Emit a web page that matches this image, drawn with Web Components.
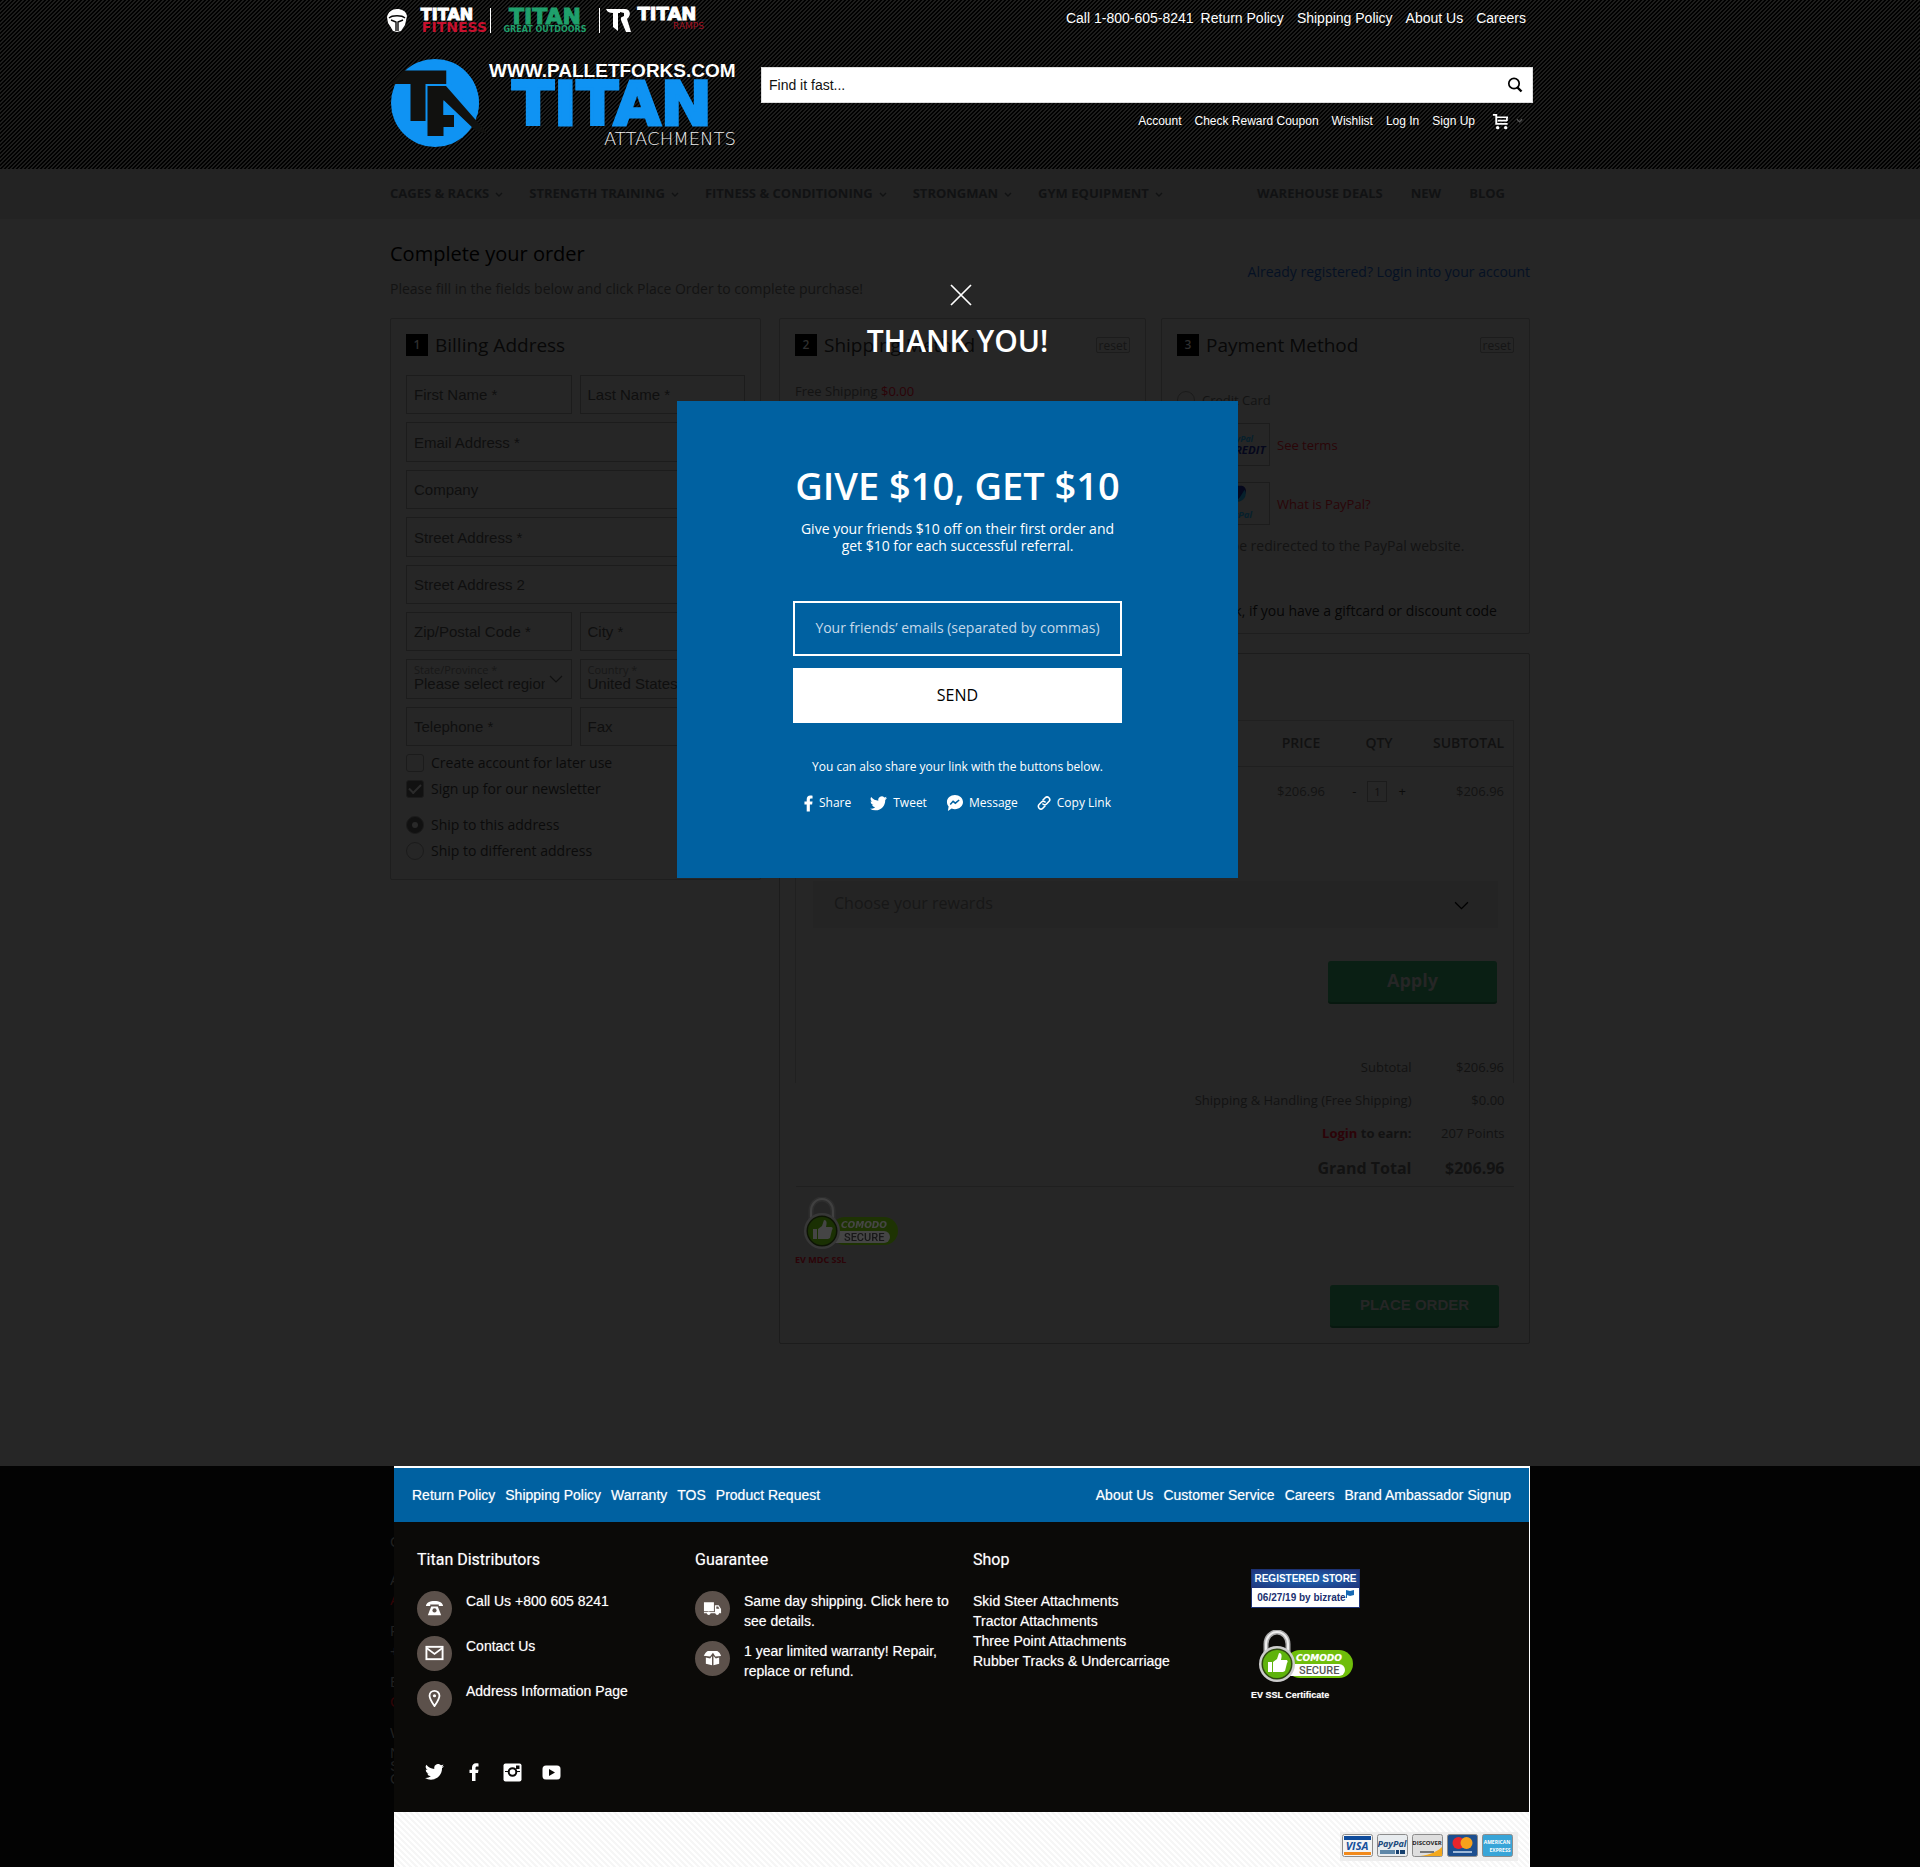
<!DOCTYPE html>
<html lang="en">
<head>
<meta charset="utf-8">
<title>Complete your order</title>
<style>
body{margin:0;min-height:100vh;display:flex;flex-direction:column;position:relative;background:#262626;font-family:"Open Sans",sans-serif;font-size:14px}
site-footer{flex:1}
</style>
</head>
<body>
<site-header></site-header>
<site-nav></site-nav>
<checkout-page></checkout-page>
<site-footer></site-footer>
<referral-modal></referral-modal>

<script>
class Base extends HTMLElement{
  connectedCallback(){
    if(this.shadowRoot) return;
    this.attachShadow({mode:'open'}).innerHTML='<style>*{box-sizing:border-box}a{color:inherit;text-decoration:none}button{font:inherit;cursor:pointer}p,h1,h2,h3,ul{margin:0;padding:0}ul{list-style:none}'+this.css()+'</style>'+this.html();
  }
  css(){return ''}
  html(){return '<slot></slot>'}
}

const ICONS={
  chevron:['0 0 8 6','<path d="M1 1l3 3 3-3" fill="none" stroke="currentColor" stroke-width="1.4"/>'],
  chevronLg:['0 0 14 9','<path d="M1 1l6 6 6-6" fill="none" stroke="currentColor" stroke-width="1.2"/>'],
  close:['0 0 22 22','<path d="M1 1l20 20M21 1L1 21" fill="none" stroke="currentColor" stroke-width="1.7"/>'],
  search:['0 0 16 16','<circle cx="7" cy="6.5" r="5.2" fill="none" stroke="currentColor" stroke-width="1.7"/><path d="M10.5 10.5l4 4" stroke="currentColor" stroke-width="2.4"/>'],
  cart:['0 0 18 17','<path d="M1 1.500h3.500v9.500h12" fill="none" stroke="currentColor" stroke-width="2"/><path d="M5 4h12M6 7.500h10M15.800 4v4" stroke="currentColor" stroke-width="1.800" fill="none"/><circle cx="6" cy="15" r="1.800" fill="currentColor"/><circle cx="14.500" cy="15" r="1.800" fill="currentColor"/>'],
  facebook:['0 0 10 18','<path d="M3 18V10H.5V6.800H3V4.500C3 1.800 4.500.2 7 .2c1 0 2 .1 2.500.2v3H8C6.800 3.400 6.500 4 6.500 5v1.800h3L9 10H6.500v8z" fill="currentColor"/>'],
  twitter:['0 0 24 20','<path d="M24 2.400a9.800 9.800 0 0 1-2.800.8A4.900 4.900 0 0 0 23.300.4a9.900 9.900 0 0 1-3.100 1.200 4.900 4.900 0 0 0-8.400 4.500A14 14 0 0 1 1.700.9a4.900 4.900 0 0 0 1.500 6.600A4.900 4.900 0 0 1 1 6.900v.1a4.900 4.900 0 0 0 3.900 4.800 5 5 0 0 1-2.200.1 4.900 4.900 0 0 0 4.600 3.400A9.900 9.900 0 0 1 0 17.500a14 14 0 0 0 7.500 2.200c9.100 0 14-7.500 14-14v-.6A10 10 0 0 0 24 2.400z" fill="currentColor"/>'],
  messenger:['0 0 18 18','<path d="M9.500.5C4.700.5 1 3.700 1 8c0 1.800.7 3.500 1.800 4.800L2 17.500l4-2.600c1 .4 2.200.6 3.500.6C14.200 15.500 18 12.200 18 8S14.200.5 9.500.5z" fill="currentColor"/><path d="M4.500 10.500l3-3.300 2.400 2 4-3.400" fill="none" stroke="#0061a1" stroke-width="1.600"/>'],
  link:['0 0 14 14','<g fill="none" stroke="currentColor" stroke-width="1.600" stroke-linecap="round"><path d="M6 4l2.200-2.200a2.500 2.500 0 0 1 3.700 3.700L9.500 8a2.500 2.500 0 0 1-3.600 0"/><path d="M8 10l-2.200 2.200a2.500 2.500 0 0 1-3.700-3.700L4.500 6a2.500 2.500 0 0 1 3.600 0"/></g>'],
  instagram:['0 0 19 19','<rect x=".5" y=".5" width="18" height="18" rx="2" fill="currentColor"/><rect x="13" y="2.500" width="3.500" height="3.500" fill="#0b0a08"/><path d="M2 8.500h3.500M13.500 8.500H17" fill="none" stroke="#0b0a08" stroke-width="1.200"/><circle cx="9.500" cy="9" r="3.800" fill="currentColor" stroke="#0b0a08" stroke-width="2"/>'],
  youtube:['0 0 19 15','<rect x=".5" y=".5" width="18" height="14" rx="3.500" fill="currentColor"/><path d="M7 4l6 3.500L7 11z" fill="#0b0a08"/>'],
  phone:['0 0 20 18','<path d="M1 7C1 3.500 5 1.500 10 1.500S19 3.500 19 7H14.500V5.200h-9V7z" fill="currentColor"/><path d="M6.500 7.500h7l3.500 9H3z" fill="currentColor"/><circle cx="10" cy="11.500" r="2.200" fill="#5c514b"/>'],
  mail:['0 0 20 18','<rect x="1.500" y="2.500" width="17" height="13" fill="none" stroke="currentColor" stroke-width="2"/><path d="M2 4l8 6 8-6" fill="none" stroke="currentColor" stroke-width="1.800"/>'],
  pin:['0 0 20 20','<path d="M10 19C7 14.500 4.500 11 4.500 7.500a5.500 5.500 0 0 1 11 0C15.500 11 13 14.500 10 19z" fill="none" stroke="currentColor" stroke-width="2"/><circle cx="10" cy="7.500" r="1.800" fill="currentColor"/>'],
  truck:['0 0 20 18','<path d="M1 3h10.500v9.500H1zM12.500 6h4l2.500 4v4h-6.500z" fill="currentColor"/><path d="M14 7.500h2l1.200 2.300H14z" fill="#5c514b"/><path d="M1 13.300h18v1.200H1z" fill="currentColor"/><circle cx="6" cy="14.500" r="1.800" fill="currentColor"/><circle cx="15" cy="14.500" r="1.800" fill="currentColor"/>'],
  box:['0 0 20 18','<path d="M5 1.500h10c2 1 3.500 3 4 5.500l-6 .5-2.500-4-3 4L.8 6.500C2 4 3.500 2.500 5 1.500z" fill="currentColor"/><path d="M3 8.500l4.500 1 2-2.500v9.500l-6.500-1.500zM17 8.500l-3.500 1-2.500-2.500v9.500l6-1.500z" fill="currentColor"/>']
};
class UiIcon extends Base{
  css(){return ':host{display:inline-flex;flex:none}svg{display:block;width:100%;height:100%}'}
  html(){const i=ICONS[this.getAttribute('name')];return '<svg viewBox="'+i[0]+'" aria-hidden="true">'+i[1]+'</svg>'}
}

class BrandStrip extends Base{
  css(){return ':host{display:block}svg{display:block}text{font-family:"DejaVu Sans",sans-serif;font-weight:700}'}
  html(){return `<svg width="320" height="40" viewBox="387 0 320 40" role="img" aria-label="Titan brands">
    <path d="M387 17c1-5 5-8 10-8s9 2 10 7l-2 9-4 6-4 1-4-1-3-5-2-3z" fill="#fff"/><path d="M389 18c3-3 13-3 16 0M391 20l5 2v9M403 20l-5 2v9" stroke="#0a0a0a" stroke-width="1.400" fill="none"/>
    <text x="447" y="20" font-size="16" text-anchor="middle" fill="#fff" stroke="#fff">TITAN</text>
    <text x="487" y="32" font-size="14" text-anchor="end" fill="#c8102e">FITNESS</text>
    <path d="M490.500 8v25M599.500 8v25" stroke="#fff"/>
    <text x="545" y="24" font-size="22" text-anchor="middle" fill="#1fa06c" stroke="#1fa06c">TITAN</text>
    <text x="545" y="32" font-size="8" text-anchor="middle" fill="#1fa06c">GREAT OUTDOORS</text>
    <path d="M606 9h19c5 0 7 6 2 10l4 13h-5l-5-12v-7h-3v18l-5-4V13c-3 0-6-1-7-4z" fill="#fff"/><path d="M620 12v6l4-2v-3z" fill="#0a0a0a"/>
    <text x="667" y="20" font-size="18" text-anchor="middle" fill="#fff" stroke="#fff">TITAN</text>
    <text x="704" y="29" font-size="9" text-anchor="end" fill="#a01020" style="font-weight:400">RAMPS</text>
  </svg>`}
}
class TitanLogo extends Base{
  css(){return ':host{display:block}svg{display:block}'}
  html(){return `<svg width="347" height="90" viewBox="390 59 347 90" role="img" aria-label="Titan Attachments">
    <circle cx="435" cy="103" r="44" fill="#0f93f3"/>
    <path d="M403 70.500H446.500V84H425.500V121H410.500V84H390L396 78z" fill="#11110f"/>
    <path d="M427.500 86H446L488 134 476 131 443.500 100V115H454V127H443.500V136H427.500z" fill="#11110f"/>
    <path d="M450 84L488 134M443 100L468 131" stroke="#0f93f3" stroke-width="0"/>
    <path d="M443.500 101L468 130 462 138 454 128V115H443.500z" fill="#0f93f3"/>
    <path d="M443.500 115H454V127H443.500z" fill="#11110f"/>
    <path d="M447 61a44 44 0 0 1 30 55L451 84H446.500V70z" fill="#0f93f3"/>
    <text x="489" y="77" font-family="Liberation Sans,sans-serif" font-size="19" font-weight="700" fill="#fff">WWW.PALLETFORKS.COM</text>
    <text x="612" y="125" text-anchor="middle" font-family="DejaVu Sans,sans-serif" font-size="61" font-weight="700" fill="#0f93f3" stroke="#0f93f3" stroke-width="3">TITAN</text>
    <text x="736" y="145" text-anchor="end" font-family="DejaVu Sans,sans-serif" font-size="18" font-weight="200" fill="#eee">ATTACHMENTS</text>
  </svg>`}
}
class SiteHeader extends Base{
  css(){return `:host{display:block;color:#fff;font-family:"Liberation Sans",Arial,sans-serif;background:linear-gradient(135deg,#000 25%,#1d1d1c 25% 50%,#000 50% 75%,#1d1d1c 75%) 0 0/4px 4px}
    .in{max-width:1140px;margin:auto;padding-bottom:20px}
    .top{display:flex;justify-content:space-between;margin:0 4px 0 -3px}
    .links{display:flex;gap:13px;line-height:36px;font-size:14px}
    .links a:first-child{margin-right:-6px}
    .main{display:flex;gap:24px;margin:19px -3px 0 0}
    .right{flex:1;padding-top:8px}
    form{display:flex;align-items:center;background:#fff;border:1px solid #ddd;height:36px;padding:0 9px 0 7px}
    input{flex:1;border:0;outline:0;background:none;font:14px "Liberation Sans",Arial,sans-serif;padding:0;color:#000}
    input::placeholder{color:#111;opacity:1}
    form button{border:0;background:none;padding:0;color:#000;display:flex}
    form ui-icon{width:16px;height:16px}
    .acct{display:flex;justify-content:flex-end;align-items:center;gap:13px;font-size:12px;margin:8px 10px 0 0;line-height:20px}
    .cart{display:flex;align-items:center;gap:7px;margin-left:4px}
    .cart ui-icon{width:17px;height:17px}.cart .c{width:7px;height:6px;color:#555}`}
  html(){return `<header class="in"><div class="top"><brand-strip></brand-strip><nav class="links"><a href="#">Call 1-800-605-8241</a><a href="#">Return Policy</a><a href="#">Shipping Policy</a><a href="#">About Us</a><a href="#">Careers</a></nav></div>
    <div class="main"><titan-logo></titan-logo><div class="right"><form><input aria-label="Search" placeholder="Find it fast..."><button type="button" aria-label="Search"><ui-icon name="search"></ui-icon></button></form>
    <nav class="acct"><a href="#">Account</a><a href="#">Check Reward Coupon</a><a href="#">Wishlist</a><a href="#">Log In</a><a href="#">Sign Up</a><a class="cart" href="#" aria-label="Cart"><ui-icon name="cart"></ui-icon><ui-icon class="c" name="chevron"></ui-icon></a></nav></div></div></header>`}
}
class SiteNav extends Base{
  css(){return `:host{display:block;background:#232323;color:#111213}
    nav{max-width:1140px;margin:auto;display:flex;gap:26px;padding:0 25px 2px 0;font-size:13px;font-weight:700;line-height:48px}
    a{display:flex;align-items:center;gap:6px}.r{display:flex;gap:28px;margin-left:auto}ui-icon{width:8px;height:6px;margin-top:4px}`}
  html(){const c='<ui-icon name="chevron"></ui-icon>';
    return '<nav>'+['CAGES &amp; RACKS','STRENGTH TRAINING','FITNESS &amp; CONDITIONING','STRONGMAN','GYM EQUIPMENT'].map(t=>'<a href="#">'+t+c+'</a>').join('')+'<div class="r"><a href="#">WAREHOUSE DEALS</a><a href="#">NEW</a><a href="#">BLOG</a></div></nav>'}
}
class StepPanel extends Base{
  css(){return `:host{display:block;border:1px solid #1e1e1e;border-radius:2px;padding:15px 15px 0}
    header{display:flex;align-items:center;height:22px}
    b{width:22px;height:22px;background:#000;color:#2f2f2f;font-weight:600;font-size:12px;line-height:22px;text-align:center;margin-right:7px}
    h2{font-size:19px;font-weight:400;line-height:22px;color:#080808}
    button{margin-left:auto;border:1px solid #1c1c1c;border-radius:2px;background:none;color:#151515;font-size:12px;line-height:13px;height:16px;padding:0 2px}`}
  html(){return '<header><b>'+this.getAttribute('step')+'</b><h2>'+this.getAttribute('heading')+'</h2>'+(this.hasAttribute('reset')?'<button type="button">reset</button>':'')+'</header><slot></slot>'}
}
class BillingForm extends Base{
  css(){return `:host{display:block;color:#111}
    .g{display:grid;grid-template-columns:1fr 1fr;grid-template-rows:39px 40px 39px 40px 39px 39px 40px 39px;gap:8px;margin-top:19px}
    .w{grid-column:1/3}
    input.t,.s{border:1px solid #1c1c1c;background:none;width:100%;min-width:0;height:100%}
    input.t{font:15px "Liberation Sans",Arial,sans-serif;padding:0 7px;color:#0f0f0f}
    input.t::placeholder{color:#0f0f0f;opacity:1}
    .s{position:relative;padding:3px 26px 0 7px;display:flex;flex-direction:column}
    .s label{font-size:11px;line-height:14px;color:#181818}
    select{appearance:none;border:0;background:none;padding:0;height:18px;margin-top:-2px;font:15px/18px "Liberation Sans",Arial,sans-serif;color:#0f0f0f;width:100%}
    .s ui-icon{position:absolute;right:8px;top:15px;width:14px;height:9px}
    .c{display:flex;align-items:center;gap:7px;font-size:14px;line-height:18px;color:#0b0b0b;margin-top:8px}
    .c+.sp{margin-top:18px}
    .c input{appearance:none;margin:0;width:18px;height:18px;border:1px solid #1b1b1b;border-radius:3px;display:grid;place-items:center}
    .c input[type=radio]{border-radius:50%}
    .c input:checked{background:#111}
    .c input[type=checkbox]:checked::after{content:"";width:10px;height:5px;border:solid #2b2b2b;border-width:0 0 2px 2px;rotate:-45deg;margin-bottom:3px}
    .c input[type=radio]:checked::after{content:"";width:6px;height:6px;border-radius:50%;background:#292929}`}
  html(){const f=(p,w)=>'<input class="t'+(w?' w':'')+'" placeholder="'+p+'" aria-label="'+p+'">';
    const s=(id,l,o)=>'<div class="s"><label for="'+id+'">'+l+' *</label><select id="'+id+'"><option>'+o+'</option></select><ui-icon name="chevronLg"></ui-icon></div>';
    return '<form><div class="g">'+f('First Name *')+f('Last Name *')+f('Email Address *',1)+f('Company',1)+f('Street Address *',1)+f('Street Address 2',1)+f('Zip/Postal Code *')+f('City *')+s('st','State/Province','Please select region, state or province')+s('co','Country','United States')+f('Telephone *')+f('Fax')+`</div>
    <label class="c"><input type="checkbox">Create account for later use</label>
    <label class="c"><input type="checkbox" checked>Sign up for our newsletter</label>
    <label class="c sp"><input type="radio" name="ship" checked>Ship to this address</label>
    <label class="c"><input type="radio" name="ship">Ship to different address</label></form>`}
}
class PaymentOptions extends Base{
  css(){return `:host{display:block;color:#131313;font-size:13px}
    label{display:flex;align-items:center;gap:7px;height:18px}
    input{appearance:none;margin:0;width:18px;height:18px;border:1px solid #1b1b1b;border-radius:50%}
    .f{margin-top:35px}
    .p{display:flex;align-items:center;gap:7px;margin-top:14px}
    .p+.p{margin-top:16px}
    .p label{height:43px}svg{border:1px solid #1c1c1c;display:block}
    a{color:#2a0508}
    p{line-height:20px;margin-top:11px;font-size:14px}
    .d{margin:45px 17px 0 0;text-align:right;color:#070707}
    text{font:italic 700 9px "Open Sans",sans-serif}`}
  html(){return `<label class="f"><input type="radio" name="pay">Credit Card</label>
    <div class="p"><label><input type="radio" name="pay" aria-label="PayPal Credit"><svg width="68" height="43" viewBox="0 0 68 43"><text x="52" y="19" text-anchor="end" fill="#06202c">PayPal</text><text x="65" y="31" text-anchor="end" fill="#05071c" style="font-size:12px">CREDIT</text></svg></label><a href="#">See terms</a></div>
    <div class="p"><label><input type="radio" name="pay" aria-label="PayPal"><svg width="68" height="43" viewBox="0 0 68 43"><path d="M30 3h10c5 1 6 7 2 11l-5 2-2 5h-8z" fill="#05071c"/><path d="M43 7c3 5 0 12-8 13l3-5z" fill="#06202c"/><text x="51" y="37" text-anchor="end" fill="#06202c" style="font-size:10px">PayPal</text></svg></label><a href="#">What is PayPal?</a></div>
    <p>You will be redirected to the PayPal website.</p><p class="d">Click, if you have a giftcard or discount code</p>`}
}
class ComodoBadge extends Base{
  css(){return ':host{display:block}svg{display:block}:host([dim]) svg{filter:brightness(.27)}'}
  html(){return `<svg width="96" height="53" viewBox="0 0 96 53" role="img" aria-label="Comodo Secure">
    <path d="M8 24V14a11 12 0 0 1 22 0v10" fill="none" stroke="#aaa" stroke-width="5"/><path d="M8 24V14a11 12 0 0 1 22 0v10" fill="none" stroke="#eee" stroke-width="2"/>
    <rect x="28" y="20" width="67" height="28" rx="14" fill="#6fbe0a"/><path d="M30 34h51a6 6 0 0 1 0 12H30z" fill="#fff"/>
    <circle cx="19" cy="34" r="18" fill="#ccc"/><circle cx="19" cy="34" r="15.500" fill="#2f4a10"/><circle cx="19" cy="34" r="14" fill="#5fb30c"/>
    <path d="M10 32h4v10h-4zM15 32l4-3 2-6c3 0 3 3 2 7h5c2 0 2 2 1 3l-2 8-2 1H15z" fill="#fff"/>
    <text x="38" y="31" font-family="DejaVu Sans,sans-serif" font-size="9" font-style="italic" font-weight="700" fill="#fff">COMODO</text>
    <text x="41" y="44" font-family="Roboto,sans-serif" font-size="11" font-weight="500" fill="#555">SECURE</text></svg>`}
}
class OrderReview extends Base{
  css(){return `:host{display:block;border:1px solid #1c1c1c;border-radius:2px;padding:66px 15px 15px;color:#131313;font-size:13px}
    .b{border:1px solid #202020;border-width:1px 1px 0;padding-bottom:46px}
    table{width:100%;border-collapse:collapse}
    th,td{padding:0;text-align:center}
    .i th{font-size:14px;font-weight:600;height:45px;padding-bottom:2px;color:#111;border-bottom:1px solid #1f1f1f}
    .i td{height:50px}
    .i .p{width:78px}.i th:last-child,.i td:last-child{width:95px;text-align:right;padding-right:9px}
    .q{display:flex;align-items:center;justify-content:center;gap:11px}
    .q button{border:0;background:none;padding:0;color:#0b0b0b}
    .q input{width:20px;height:21px;border:1px solid #1b1b1b;background:none;text-align:center;padding:0;font:11px "Open Sans",sans-serif;color:#101010}
    .sel{position:relative;margin:65px 15px 0 17px}
    select{appearance:none;width:100%;height:47px;border:0;background:#242424;padding:0 0 3px 21px;font:16px "Open Sans",sans-serif;color:#171717}
    .sel ui-icon{position:absolute;right:29px;top:20px;width:15px;height:10px;color:#000}
    .btn{display:block;width:169px;height:43px;border:0;border-bottom:2px solid #07180f;border-radius:3px;background:#0a1f14;color:#262626;font-weight:700;padding-bottom:4px;margin:33px 16px 0 auto;font-size:18px}
    .t{color:#121212}.t td{text-align:right;height:33px;padding-right:10px}.t td:last-child{width:92px;padding-right:9px}
    .t tr:first-child td:first-child{border-left:1px solid #202020}.t tr:first-child td:last-child{border-right:1px solid #202020}
    .t .g td{height:37px;padding-top:2px;font-size:16px;font-weight:700;border-bottom:1px solid #1f1f1f}
    .red{color:#2c0308}
    comodo-badge{margin:10px 0 0 8px}
    .ev{display:block;font-size:9px;font-weight:700;line-height:14px;margin-top:3px}
    .place{font-family:"Liberation Sans",Arial,sans-serif;font-size:15px;padding-bottom:2px;margin:18px 15px 0 auto}`}
  html(){return `<div class="b"><table class="i"><thead><tr><th></th><th class="p">PRICE</th><th class="p">QTY</th><th>SUBTOTAL</th></tr></thead><tbody><tr><td></td><td>$206.96</td><td><div class="q"><button type="button" aria-label="Less">-</button><input aria-label="Quantity" value="1"><button type="button" aria-label="More">+</button></div></td><td>$206.96</td></tr></tbody></table>
    <div class="sel"><select aria-label="Rewards"><option>Choose your rewards</option></select><ui-icon name="chevronLg"></ui-icon></div>
    <button class="btn" type="button">Apply</button></div>
    <table class="t"><tbody><tr><td>Subtotal</td><td>$206.96</td></tr><tr><td>Shipping &amp; Handling (Free Shipping)</td><td>$0.00</td></tr><tr><td><strong><a class="red" href="#">Login</a> to earn:</strong></td><td>207 Points</td></tr><tr class="g"><td>Grand Total</td><td>$206.96</td></tr></tbody></table>
    <comodo-badge dim></comodo-badge><a class="ev red" href="#">EV MDC SSL</a>
    <button class="btn place" type="button">PLACE ORDER</button>`}
}
class CheckoutPage extends Base{
  css(){return `:host{display:block;padding-bottom:122px}
    main{max-width:1140px;margin:auto;padding-top:18px}
    .h{display:flex;justify-content:space-between;align-items:flex-start;height:81px}
    h1{font-size:20px;font-weight:400;line-height:34px;color:#000}
    .h p{line-height:20px;margin-top:8px;color:#131313}
    .h>a{color:#051124;margin-top:25px;line-height:20px}
    .cols{display:grid;grid-template-columns:371px 1fr;gap:18px;align-items:start}
    .r{display:grid;grid-template-columns:367px 1fr;gap:19px 15px}
    .bill{padding-bottom:19px}
    .pay{padding-bottom:12px}
    .free{font-size:13px;line-height:20px;margin-top:25px;color:#131313}.free span{color:#2c0308}
    order-review{grid-column:1/3}`}
  html(){return `<main><div class="h"><div><h1>Complete your order</h1><p>Please fill in the fields below and click Place Order to complete purchase!</p></div><a href="#">Already registered? Login into your account</a></div>
    <div class="cols"><step-panel class="bill" step="1" heading="Billing Address"><billing-form></billing-form></step-panel>
    <div class="r"><step-panel step="2" heading="Shipping Method" reset><p class="free">Free Shipping <span>$0.00</span></p></step-panel>
    <step-panel class="pay" step="3" heading="Payment Method" reset><payment-options></payment-options></step-panel>
    <order-review></order-review></div></div></main>`}
}
class ReferralModal extends Base{
  css(){return `:host{position:absolute;inset:0;display:flex;flex-direction:column;align-items:center;padding:284px 5px 0 0;box-sizing:border-box;color:#fff}
    .x{border:0;background:none;padding:0;color:#fff;margin-left:7px;display:flex}.x ui-icon{width:22px;height:22px}
    h2{font-size:30px;font-weight:600;line-height:40px;margin:15px 0 40px}
    section{width:561px;background:#0061a1;padding:59px 116px 65px;display:flex;flex-direction:column;align-items:center;text-align:center}
    h3{font-size:38px;font-weight:600;line-height:50px;white-space:nowrap}
    .d{font-size:14px;line-height:17px;margin:10px 0 47px;white-space:nowrap}
    form{display:grid;gap:12px;width:100%}
    input{height:55px;border:2px solid #fff;background:none;text-align:center;font:14px "Open Sans",sans-serif;color:#fff;padding:0 0 3px;min-width:0}
    input::placeholder{color:#c5d9ea;opacity:1}
    form button{height:55px;border:0;background:#fff;color:#000;font-size:16px;padding-bottom:2px}
    .s{font-size:12px;line-height:18px;margin:35px 0 17px}
    ul{display:flex;gap:19px;font-size:12px;line-height:20px}
    li a{display:flex;align-items:center;gap:6px}
    .f{width:9px;height:17px}.w{width:17px;height:15px}.m{width:17px;height:18px}.l{width:14px;height:14px}`}
  html(){return `<button class="x" type="button" aria-label="Close"><ui-icon name="close"></ui-icon></button><h2>THANK YOU!</h2>
    <section role="dialog" aria-label="Referral"><h3>GIVE $10, GET $10</h3><p class="d">Give your friends $10 off on their first order and<br>get $10 for each successful referral.</p>
    <form><input type="text" aria-label="Your friends’ emails" placeholder="Your friends’ emails (separated by commas)"><button type="button">SEND</button></form>
    <p class="s">You can also share your link with the buttons below.</p>
    <ul><li><a href="#"><ui-icon class="f" name="facebook"></ui-icon>Share</a></li><li><a href="#"><ui-icon class="w" name="twitter"></ui-icon>Tweet</a></li><li><a href="#"><ui-icon class="m" name="messenger"></ui-icon>Message</a></li><li><a href="#"><ui-icon class="l" name="link"></ui-icon>Copy Link</a></li></ul></section>`}
}
class PayCards extends Base{
  css(){return ':host{display:block}svg{display:block}text{font-family:"Open Sans",sans-serif;font-weight:700;font-style:italic;text-anchor:middle}'}
  html(){return `<svg width="178" height="29" viewBox="0 0 178 29" role="img" aria-label="Accepted cards"><path d="M0 0h178v29H0z" fill="#eee"/>
    <g stroke="#8c8c8c"><rect x="2.500" y="2.500" width="30" height="22" rx="2" fill="#f4f4f4"/><rect x="37.500" y="2.500" width="30" height="22" rx="2" fill="#e8ecef"/><rect x="72.500" y="2.500" width="30" height="22" rx="2" fill="#dedede"/><rect x="107.500" y="2.500" width="30" height="22" rx="2" fill="#1d4f8f"/><rect x="142.500" y="2.500" width="30" height="22" rx="2" fill="#38a5d8"/></g>
    <path d="M4 4h27v4H4z" fill="#0f4c9c"/><path d="M4 20h27v3H4z" fill="#f28a1c"/><text x="17" y="18" font-size="11" fill="#164f9c">VISA</text>
    <text x="52" y="15" font-size="9" fill="#1c4a7c">PayPal</text><path d="M40 18h15v4H40z" fill="#5e87a8"/><path d="M56 18h3v4h-3zM60 18h5v4h-5z" fill="#16406e"/>
    <path d="M80 24c10-1 18-5 22-9v9z" fill="#f3a81c"/><text x="87" y="13" font-size="6" fill="#222" style="font-style:normal">DISCOVER</text><path d="M80 19h14v2H80z" fill="#777"/>
    <circle cx="118.500" cy="11" r="6" fill="#e8252c"/><circle cx="126.500" cy="11" r="6" fill="#f7a11b"/><path d="M113 19h19v2h-19z" fill="#9fb9d8"/>
    <g fill="#fff"><text x="157" y="12" font-size="5" style="font-style:normal">AMERICAN</text><text x="160" y="20" font-size="5" style="font-style:normal">EXPRESS</text></g></svg>`}
}
class BizrateBadge extends Base{
  css(){return ':host{display:block}div{width:109px;border:1px solid #1d3275;background:#fff;font:700 11px/18px "Liberation Sans",Arial,sans-serif;color:#20306f;text-align:center;white-space:nowrap;text-shadow:none}b{display:block;background:radial-gradient(#1d6bb8,#20347c);color:#fff;font-size:10px;line-height:18px;height:18px}svg{width:8px;height:8px;vertical-align:3px}span{font-size:10px}'}
  html(){return '<div><b>REGISTERED STORE</b><span>06/27/19 by bizrate</span><svg viewBox="0 0 8 8"><path d="M0 0l4 1 4-1v5L4 6 1 5v3H0z" fill="#1668b4"/></svg></div>'}
}
class SiteFooter extends Base{
  css(){return `:host{display:flex;flex-direction:column;background:#030303;font-family:"Liberation Sans",Arial,sans-serif;color:#fff}
    .in{max-width:1140px;width:100%;margin:0 auto;flex:1;display:flex}
    .peek{width:4px;overflow:hidden;color:#202020;font-size:15px;line-height:20px;padding-top:66px;flex:none}
    .peek span{display:block;margin-bottom:18px}.peek .z{margin:0}.peek .k{margin-bottom:11px}.peek .r{color:#300306}.peek .n{margin-bottom:-7px}
    .box{flex:1;min-width:0;display:flex;flex-direction:column;border:solid #fff;border-width:2px 1px 0 0}
    .bar{background:#0061a1;display:flex;justify-content:space-between;padding:0 18px;line-height:54px;text-shadow:0 0 1px rgba(255,255,255,.5)}
    .bar nav{display:flex;gap:10px}
    .dark{background:#0b0a08;padding:28px 23px 30px;text-shadow:0 0 1px rgba(255,255,255,.5)}
    .cols{display:grid;grid-template-columns:repeat(3,278px) 1fr}
    h3{font:400 16px/20px Roboto,sans-serif;margin-bottom:21px}
    li{line-height:20px}
    .ic li{display:flex;gap:14px;min-height:35px;margin-bottom:10px;padding-right:18px}
    .ic i{width:35px;height:35px;border-radius:50%;background:#5c514b;display:grid;place-items:center;flex:none}
    .ic i ui-icon{width:19px;height:18px}
    .seal{padding-top:19px}.seal comodo-badge{margin:22px 0 0 7px}.seal p{font-size:9px;font-weight:700;line-height:14px;margin-top:5px}
    .soc{display:flex;align-items:center;margin:37px 0 0 -2px}
    .soc a{width:39px;display:flex;justify-content:center;height:19px;align-items:center}
    .soc .t{width:19px;height:16px}.soc .f{width:10px;height:18px}.soc .g{width:19px;height:19px}.soc .y{width:19px;height:15px}
    .base{flex:1;background:linear-gradient(45deg,#fff 25%,#f6f6f6 25% 50%,#fff 50% 75%,#f6f6f6 75%) 0 0/6px 6px;padding:20px 11px 6px;display:flex;justify-content:flex-end;align-items:flex-start}`}
  html(){const li=(i,t)=>'<li><i><ui-icon name="'+i+'"></ui-icon></i><a href="#">'+t+'</a></li>';
    return `<footer class="in"><div class="peek"><span>C</span><span class="z">A</span><span class="r k">A</span><span class="z">P</span><span class="k">+</span><span class="z">E</span><span class="r k">C</span><span class="z">W</span><span class="n">N</span><span class="n">S</span><span>C</span></div>
    <div class="box"><div class="bar"><nav><a href="#">Return Policy</a><a href="#">Shipping Policy</a><a href="#">Warranty</a><a href="#">TOS</a><a href="#">Product Request</a></nav><nav><a href="#">About Us</a><a href="#">Customer Service</a><a href="#">Careers</a><a href="#">Brand Ambassador Signup</a></nav></div>
    <div class="dark"><div class="cols"><div class="ic"><h3>Titan Distributors</h3><ul>${li('phone','Call Us +800 605 8241')}${li('mail','Contact Us')}${li('pin','Address Information Page')}</ul></div>
    <div class="ic"><h3>Guarantee</h3><ul>${li('truck','Same day shipping. Click here to see details.')}${li('box','1 year limited warranty! Repair, replace or refund.')}</ul></div>
    <div><h3>Shop</h3><ul><li><a href="#">Skid Steer Attachments</a></li><li><a href="#">Tractor Attachments</a></li><li><a href="#">Three Point Attachments</a></li><li><a href="#">Rubber Tracks &amp; Undercarriage</a></li></ul></div>
    <div class="seal"><bizrate-badge></bizrate-badge><comodo-badge></comodo-badge><p>EV SSL Certificate</p></div></div>
    <nav class="soc"><a href="#" aria-label="Twitter"><ui-icon class="t" name="twitter"></ui-icon></a><a href="#" aria-label="Facebook"><ui-icon class="f" name="facebook"></ui-icon></a><a href="#" aria-label="Instagram"><ui-icon class="g" name="instagram"></ui-icon></a><a href="#" aria-label="YouTube"><ui-icon class="y" name="youtube"></ui-icon></a></nav></div>
    <div class="base"><pay-cards></pay-cards></div></div></footer>`}
}
Object.entries({'ui-icon':UiIcon,'brand-strip':BrandStrip,'titan-logo':TitanLogo,'site-header':SiteHeader,'site-nav':SiteNav,'step-panel':StepPanel,'billing-form':BillingForm,'payment-options':PaymentOptions,'comodo-badge':ComodoBadge,'order-review':OrderReview,'checkout-page':CheckoutPage,'referral-modal':ReferralModal,'pay-cards':PayCards,'bizrate-badge':BizrateBadge,'site-footer':SiteFooter}).forEach(([n,c])=>customElements.define(n,c));
</script>
</body>
</html>
